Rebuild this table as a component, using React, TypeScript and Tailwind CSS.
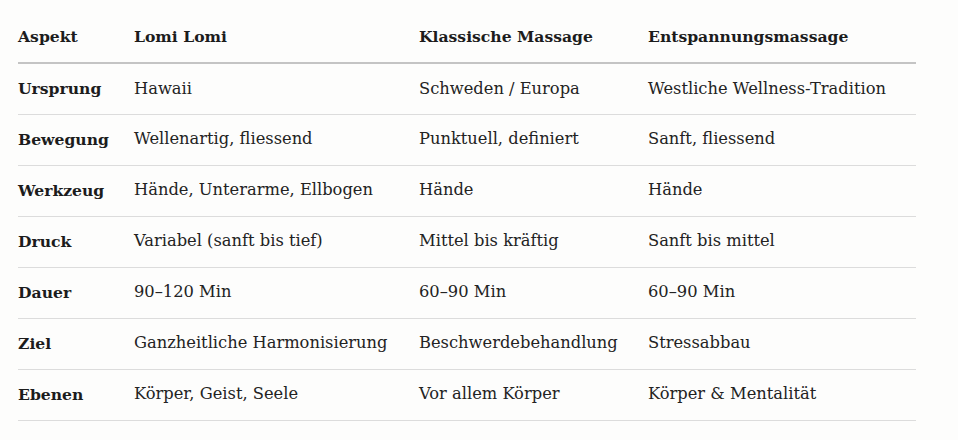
const rows: [string, string, string, string][] = [
  ["Ursprung", "Hawaii", "Schweden / Europa", "Westliche Wellness-Tradition"],
  ["Bewegung", "Wellenartig, fliessend", "Punktuell, definiert", "Sanft, fliessend"],
  ["Werkzeug", "Hände, Unterarme, Ellbogen", "Hände", "Hände"],
  ["Druck", "Variabel (sanft bis tief)", "Mittel bis kräftig", "Sanft bis mittel"],
  ["Dauer", "90–120 Min", "60–90 Min", "60–90 Min"],
  ["Ziel", "Ganzheitliche Harmonisierung", "Beschwerdebehandlung", "Stressabbau"],
  ["Ebenen", "Körper, Geist, Seele", "Vor allem Körper", "Körper & Mentalität"],
];

export default function App() {
  return (
    <div className="w-[958px] h-[440px] bg-[#fdfdfc] pl-[18px] pt-[11px] font-['DejaVu_Serif',serif] text-[16.3px] text-[#232323]">
      <table className="w-[898px] table-fixed border-collapse">
        <colgroup>
          <col className="w-[116px]" />
          <col className="w-[285px]" />
          <col className="w-[229px]" />
          <col />
        </colgroup>
        <thead>
          <tr className="h-[52px] border-b-2 border-[#c4c4c4] text-left text-[15.6px] text-[#1c1c1c]">
            <th className="font-bold">Aspekt</th>
            <th className="font-bold">Lomi Lomi</th>
            <th className="font-bold">Klassische Massage</th>
            <th className="font-bold">Entspannungsmassage</th>
          </tr>
        </thead>
        <tbody>
          {rows.map((r) => (
            <tr key={r[0]} className="h-[51px] border-b border-[#dcdcdc]">
              <td className="font-bold text-[15.6px] text-[#1c1c1c]">{r[0]}</td>
              <td>{r[1]}</td>
              <td>{r[2]}</td>
              <td>{r[3]}</td>
            </tr>
          ))}
        </tbody>
      </table>
    </div>
  );
}
